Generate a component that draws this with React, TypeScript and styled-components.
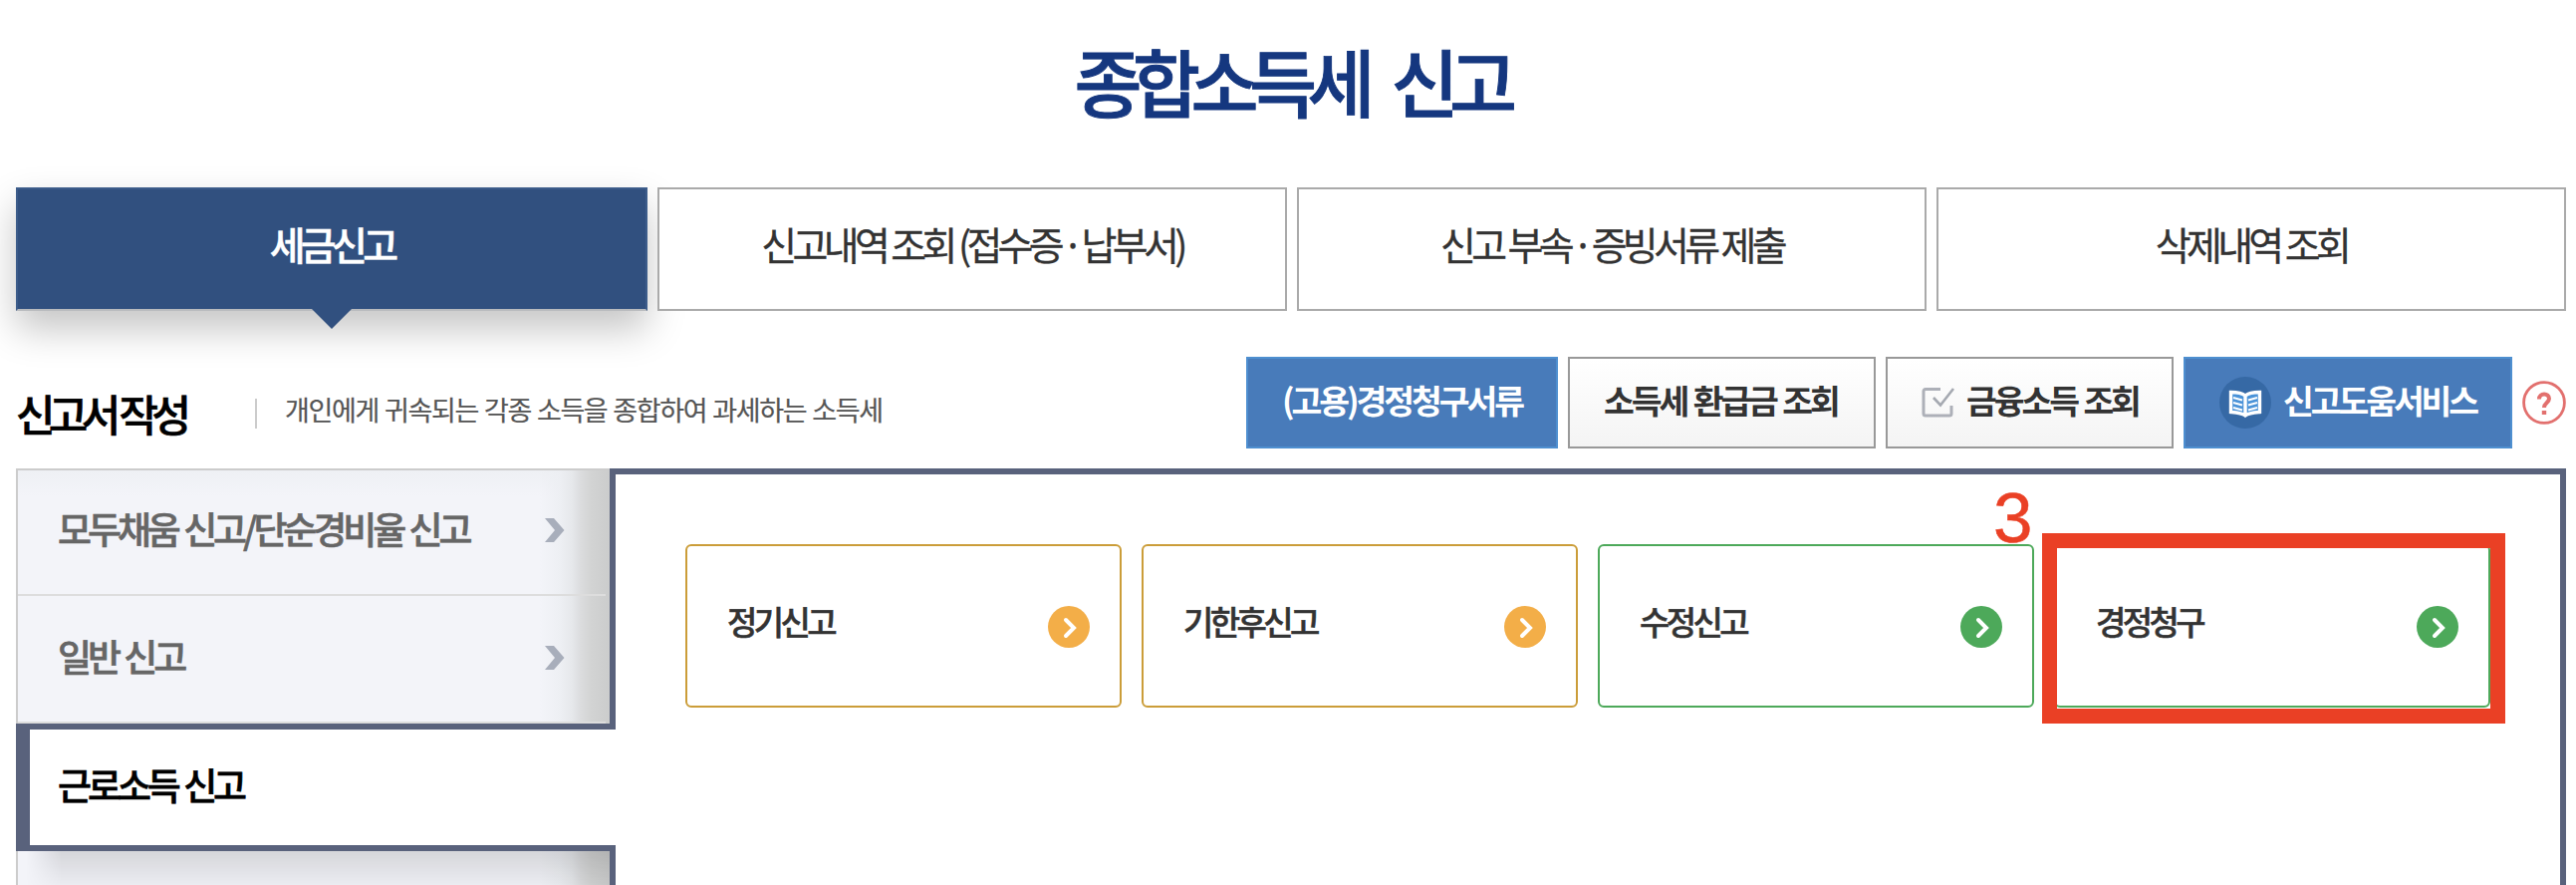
import React from 'react';
import styled, { createGlobalStyle, css } from 'styled-components';

const Global = createGlobalStyle`
  * { box-sizing: border-box; }
  body {
    margin: 0;
    background: #fff;
    font-family: "Noto Sans CJK KR", "Noto Sans", sans-serif;
    color: #333;
  }
`;

const Page = styled.div`
  width: 2586px;
  height: 888px;
  overflow: hidden;
  padding: 0 10px 0 16px;
`;

const Title = styled.h1`
  margin: 0;
  height: 188px;
  padding: 28px 0 0 0;
  text-align: center;
  font-size: 74px;
  line-height: 104px;
  font-weight: 500;
  letter-spacing: -9.6px;
  word-spacing: 18.6px;
  -webkit-text-stroke: 0.9px;
  color: #15377f;
`;

const Tabs = styled.nav`
  display: grid;
  grid-template-columns: 634px repeat(3, 632px);
  gap: 10px;
  height: 124px;
`;

const Tab = styled.a<{ $active?: boolean }>`
  position: relative;
  display: flex;
  align-items: center;
  justify-content: center;
  padding-bottom: 12px;
  border: 2px solid #aaa;
  background: #fff;
  font-size: 39px;
  letter-spacing: -4.7px;
  word-spacing: 1.2px;
  white-space: pre;
  -webkit-text-stroke: 0.3px;
  ${(p) =>
    p.$active &&
    css`
      border-color: #3c5c8a;
      border-bottom-color: #b9bbbe;
      background: #31507f;
      color: #fff;
      font-weight: 500;
      -webkit-text-stroke: 0.5px;
      box-shadow: 0 18px 36px rgba(0, 0, 0, 0.23);
      &::after {
        content: '';
        position: absolute;
        top: 100%;
        left: 295px;
        border: 20px solid transparent;
        border-bottom-width: 0;
        border-top-color: #31507f;
      }
    `}
`;

const MiddleDot = styled.span`
  margin: 0 -3px;
`;

const Header = styled.header`
  display: flex;
  height: 158px;
  padding-top: 46px;
`;

const Heading = styled.h2`
  margin: 0;
  width: 240px;
  padding-top: 26px;
  font-size: 43px;
  line-height: 60px;
  font-weight: 500;
  letter-spacing: -6.7px;
  word-spacing: 2px;
  -webkit-text-stroke: 0.6px;
  color: #000;
`;

const Description = styled.p`
  margin: 42px 0 0;
  height: 30px;
  padding-left: 28px;
  border-left: 2px solid #ccc;
  font-size: 27px;
  line-height: 21px;
  letter-spacing: -1.35px;
  word-spacing: 1.3px;
  -webkit-text-stroke: 0.2px;
  color: #555;
`;

const Actions = styled.div`
  display: flex;
  gap: 10px;
  height: 92px;
  margin-left: auto;
`;

const Action = styled.button<{ $width: number; $primary?: boolean }>`
  display: flex;
  align-items: center;
  width: ${(p) => p.$width}px;
  padding: 0 0 0 34px;
  border: 2px solid ${(p) => (p.$primary ? '#4e8fd0' : '#999')};
  background: ${(p) => (p.$primary ? '#487bba' : 'linear-gradient(#fff, #f4f4f4)')};
  color: ${(p) => (p.$primary ? '#fff' : '#333')};
  font: 700 33.5px/46px "Noto Sans CJK KR", sans-serif;
  letter-spacing: -3.1px;
  word-spacing: 2px;
  white-space: nowrap;
`;

const ActionText = styled.span`
  padding-bottom: 7px;
`;

const ActionIcon = styled.svg<{ $gap: number }>`
  flex: none;
  margin-right: ${(p) => p.$gap}px;
`;

const HelpIcon = styled.svg`
  flex: none;
  margin-top: 24px;
`;

const Body = styled.div`
  display: flex;
  height: 600px;
`;

const Sidebar = styled.ul`
  flex: none;
  width: 596px;
  margin: 0;
  padding: 0;
  list-style: none;
  border: solid #ccc;
  border-width: 2px 0 0 2px;
  background:
    linear-gradient(
      to left,
      #cbcccc 0,
      #d2d3d3 18px,
      #dcdddf 30px,
      #e6e8eb 38px,
      rgba(236, 238, 242, 0.8) 50px,
      rgba(243, 244, 249, 0) 70px
    ),
    linear-gradient(#eef0f4, rgba(243, 244, 249, 0) 26px),
    #f3f4f9;
`;

const MenuItem = styled.li<{ $first?: boolean; $active?: boolean }>`
  display: flex;
  align-items: center;
  justify-content: space-between;
  height: ${(p) => (p.$first ? 126 : 128)}px;
  margin-right: 4px;
  padding: 0 40px ${(p) => (p.$first ? 4 : 2)}px 40px;
  border-bottom: 2px solid #ddd;
  font-size: 37px;
  font-weight: 500;
  letter-spacing: -4.1px;
  word-spacing: 2.2px;
  -webkit-text-stroke: 0.6px;
  color: #666;
  ${(p) =>
    p.$active &&
    css`
      position: relative;
      margin: 0 -6px 0 -2px;
      padding: 0 0 2px 28px;
      border: solid #59627c;
      border-width: 6px 0 6px 14px;
      background: #fff;
      color: #000;
    `}
`;

const MenuText = styled.span`
  padding-bottom: 4px;
`;

const CastShadow = styled.li`
  height: 60px;
  background: linear-gradient(rgba(0, 0, 0, 0.12), rgba(0, 0, 0, 0.03) 34px, transparent 50px);
  mask-image: linear-gradient(to right, transparent 8px, #000 44px);
`;

const Main = styled.main`
  flex: 1;
  padding: 70px 0 0 70px;
  border: 6px solid #59627c;
`;

const Cards = styled.div`
  display: grid;
  grid-template-columns: repeat(4, 438px);
  gap: 20px;
`;

const Card = styled.a<{ $color: string }>`
  position: relative;
  display: flex;
  align-items: center;
  justify-content: space-between;
  height: 164px;
  padding: 0 30px 0 40px;
  border: 2px solid ${(p) => p.$color};
  border-radius: 6px;
  font-size: 33px;
  font-weight: 500;
  letter-spacing: -3.6px;
  -webkit-text-stroke: 0.5px;
`;

const CardText = styled.span`
  padding-bottom: 10px;
`;

const CardIcon = styled.svg`
  margin-top: 2px;
`;

const Highlight = styled.div`
  position: absolute;
  inset: -13px -17px -18px -14px;
  border: 15px solid #ea4025;
`;

const StepNumber = styled.div`
  position: absolute;
  top: -68px;
  left: -63px;
  font: 71px/80px "Liberation Sans", Arial, sans-serif;
  letter-spacing: 0;
  color: #ea4025;
`;

const CheckIcon = () => (
  <ActionIcon $gap={11} width="34" height="32" viewBox="0 0 34 32" fill="none">
    <path d="M19 2.500H4a2 2 0 0 0-2 2V27a2 2 0 0 0 2 2h24a2 2 0 0 0 2-2v-8" stroke="#adb0b8" strokeWidth="3" />
    <path d="M12 11l7 7.500L32 2" stroke="#a5a9b1" strokeWidth="2.600" />
  </ActionIcon>
);

const BookIcon = () => (
  <ActionIcon $gap={12} width="52" height="52" viewBox="0 0 52 52">
    <circle cx="26" cy="26" r="26" fill="#3669a5" />
    <path
      d="M11.500 15.500c6 0 11 .500 14.500 3.500 3.500-3 8.500-3.500 14.500-3.500v20c-6 .500-11 .800-14.500 3.500-3.500-2.700-8.500-3-14.500-3.500zM26 19v20"
      fill="#4b93d8"
      stroke="#fff"
      strokeWidth="3.400"
    />
    <path d="M14 21l9 2.500M14 26l9 2.500M14 31l9 2.500M38 21l-9 2.500M38 26l-9 2.500M38 31l-9 2.500" stroke="#fff" strokeWidth="2.200" />
  </ActionIcon>
);

const RowChevron = () => (
  <svg width="22" height="26" viewBox="0 0 22 26">
    <path d="M1 1h9l10.500 12L10 25H1l10-12z" fill="#a8aebb" />
  </svg>
);

const GOLD = '#cb9d39';
const GREEN = '#4da95a';

const cards = [
  { label: '정기신고', border: GOLD, fill: '#f3ae48' },
  { label: '기한후신고', border: GOLD, fill: '#f3ae48' },
  { label: '수정신고', border: GREEN, fill: GREEN },
  { label: '경정청구', border: GREEN, fill: GREEN, step: 3 },
];

export default function App() {
  return (
    <Page>
      <Global />
      <Title>종합소득세 신고</Title>
      <Tabs>
        <Tab $active>세금신고</Tab>
        <Tab>
          신고내역 조회 (접수증 <MiddleDot>·</MiddleDot> 납부서)
        </Tab>
        <Tab>
          신고 부속 <MiddleDot>·</MiddleDot> 증빙서류 제출
        </Tab>
        <Tab>삭제내역 조회</Tab>
      </Tabs>
      <Header>
        <Heading>신고서 작성</Heading>
        <Description>개인에게 귀속되는 각종 소득을 종합하여 과세하는 소득세</Description>
        <Actions>
          <Action $width={313} $primary>
            <ActionText>(고용)경정청구서류</ActionText>
          </Action>
          <Action $width={309}>
            <ActionText>소득세 환급금 조회</ActionText>
          </Action>
          <Action $width={289}>
            <CheckIcon />
            <ActionText>금융소득 조회</ActionText>
          </Action>
          <Action $width={330} $primary>
            <BookIcon />
            <ActionText>신고도움서비스</ActionText>
          </Action>
          <HelpIcon width="44" height="44" viewBox="0 0 44 44" fill="none" stroke="#e2706e">
            <circle cx="22" cy="22" r="20.400" strokeWidth="2.800" />
            <path d="M17 18.500c0-6.500 10-6.500 10-.500 0 4-5 4-5 9" strokeWidth="4" />
            <path d="M22 30v4" strokeWidth="4.400" />
          </HelpIcon>
        </Actions>
      </Header>
      <Body>
        <Sidebar>
          <MenuItem $first>
            <MenuText>모두채움 신고/단순경비율 신고</MenuText>
            <RowChevron />
          </MenuItem>
          <MenuItem>
            <MenuText>일반 신고</MenuText>
            <RowChevron />
          </MenuItem>
          <MenuItem $active>
            <MenuText>근로소득 신고</MenuText>
          </MenuItem>
          <CastShadow />
        </Sidebar>
        <Main>
          <Cards>
            {cards.map((card) => (
              <Card key={card.label} $color={card.border}>
                <CardText>{card.label}</CardText>
                <CardIcon width="42" height="42" viewBox="0 0 42 42">
                  <circle cx="21" cy="21" r="21" fill={card.fill} />
                  <path d="M18 14l8 8-8 8" fill="none" stroke="#fff" strokeWidth="4" strokeLinecap="round" />
                </CardIcon>
                {card.step && (
                  <>
                    <Highlight />
                    <StepNumber>{card.step}</StepNumber>
                  </>
                )}
              </Card>
            ))}
          </Cards>
        </Main>
      </Body>
    </Page>
  );
}
